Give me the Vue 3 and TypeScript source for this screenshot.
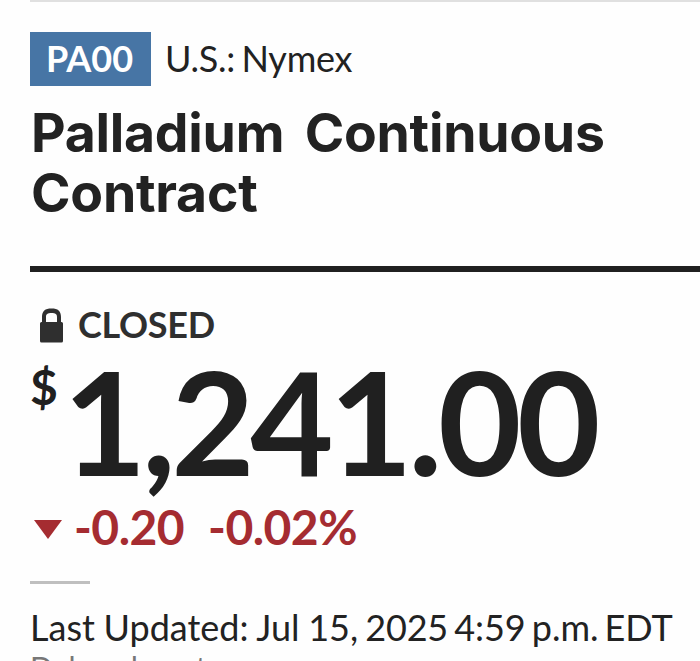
<script setup lang="ts">
import { computed } from 'vue';

interface Quote {
  symbol: string;
  exchange: string;
  name: string;
  status: string;
  currency: string;
  price: number;
  change: number;
  changePercent: number;
  note: string;
}

const quote: Quote = {
  symbol: 'PA00',
  exchange: 'U.S.: Nymex',
  name: 'Palladium Continuous Contract',
  status: 'CLOSED',
  currency: '$',
  price: 1241,
  change: -0.2,
  changePercent: -0.02,
  note: 'Delayed quote',
};

const price = computed(() =>
  quote.price.toLocaleString('en-US', { minimumFractionDigits: 2 }),
);
</script>

<template>
  <main class="quote">
    <header class="company">
      <div class="company__ticker">
        <span class="company__symbol">{{ quote.symbol }}</span>
        <span class="company__exchange">{{ quote.exchange }}</span>
      </div>
      <h1 class="company__name">{{ quote.name }}</h1>
    </header>

    <section class="intraday">
      <div class="status">
        <svg class="status__icon" viewBox="0 0 24 36" aria-hidden="true">
          <path
            fill-rule="evenodd"
            d="M2 15V9C2 3 5 .5 11.500 .5S21 3 21 9V14h.5q1.500 0 1.500 1.500v17.500q0 1.500-1.500 1.500H1.500Q0 34.500 0 33v-17.500Q0 14 1.500 14H2ZM6 14h11V9C17 6 15.500 5 11.500 5S6 6 6 9Z"
          />
        </svg>
        <span class="status__text">{{ quote.status }}</span>
      </div>

      <div class="price">
        <sup class="price__currency">{{ quote.currency }}</sup>
        <span class="price__value">{{ price }}</span>
      </div>

      <div class="change">
        <svg class="change__arrow" viewBox="0 0 28 19" aria-hidden="true">
          <path d="M0 0h28L14 19Z" />
        </svg>
        <span class="change__point">{{ quote.change.toFixed(2) }}</span>
        <span class="change__percent">{{ quote.changePercent.toFixed(2) }}%</span>
      </div>

      <footer class="timestamp">
        <p class="timestamp__updated">
          Last Updated: Jul 15,
          <span class="timestamp__year">2025</span>
          <span class="timestamp__time"> 4:59 p.m. EDT</span>
        </p>
        <p class="timestamp__note">{{ quote.note }}</p>
      </footer>
    </section>
  </main>
</template>

<style>
body {
  margin: 0;
  background: #fefefe;
}
</style>

<style scoped>
.quote {
  box-sizing: border-box;
  height: 661px;
  padding-left: 30px;
  overflow: hidden;
  color: #222;
  font-family: Lato, 'Liberation Sans', sans-serif;
}

.company {
  box-sizing: border-box;
  height: 266px;
  padding-top: 30px;
  border-top: 2px solid #e0e0e0;
}

.company__ticker {
  display: flex;
  gap: 14px;
  height: 54px;
  font-size: 36px;
  line-height: 52px;
}

.company__symbol {
  box-sizing: border-box;
  width: 121px;
  padding-right: 2px;
  background: #4775a5;
  color: #fff;
  font-weight: 700;
  text-align: center;
}

.company__exchange {
  letter-spacing: -0.250px;
  word-spacing: -2.500px;
}

.company__name {
  width: 620px;
  margin: 17px 0 0;
  padding-left: 1px;
  font-family: Inter, Lato, sans-serif;
  font-size: 53.500px;
  font-weight: 700;
  letter-spacing: -0.250px;
  line-height: 60px;
  word-spacing: 8px;
}

.intraday {
  border-top: 6px solid #202020;
}

.status {
  display: flex;
  height: 44px;
  padding: 32px 0 0 10px;
}

.status__icon {
  width: 24px;
  height: 36px;
  margin: 4px 14px 0 0;
  fill: #2f2f2f;
}

.status__text {
  color: #2f2f2f;
  font-size: 36px;
  font-weight: 700;
  letter-spacing: -0.300px;
  line-height: 40px;
}

.price {
  display: flex;
  height: 154px;
  color: #202020;
}

.price__currency {
  width: 33px;
  margin-top: 10px;
  font-size: 48px;
  font-weight: 700;
  line-height: 58px;
}

.price__value {
  font-size: 144px;
  font-weight: 700;
  letter-spacing: -4.500px;
  line-height: 145px;
}

.change {
  display: flex;
  align-items: center;
  height: 58px;
  padding-left: 4px;
  color: #a52c31;
  font-size: 48px;
  font-weight: 700;
  letter-spacing: -0.550px;
  line-height: 50px;
}

.change span {
  margin-bottom: 8px;
}

.change__arrow {
  width: 28px;
  height: 19px;
  margin: 0 12px 3px 0;
  fill: currentColor;
}

.change .change__point {
  margin-right: 24px;
}

.timestamp {
  margin-top: 21px;
}

.timestamp::before {
  display: block;
  width: 60px;
  height: 3px;
  background: #bfbfbf;
  content: '';
}

.timestamp p {
  margin: 0;
  white-space: nowrap;
}

.timestamp__updated {
  padding-top: 21px;
  font-size: 36px;
  line-height: 44px;
  word-spacing: -0.500px;
}

.timestamp__year {
  margin-left: -1.500px;
  letter-spacing: -0.200px;
}

.timestamp__time {
  letter-spacing: -0.050px;
  word-spacing: -3px;
}

.timestamp__note {
  color: #777;
  font-size: 30px;
  line-height: 36px;
}
</style>
